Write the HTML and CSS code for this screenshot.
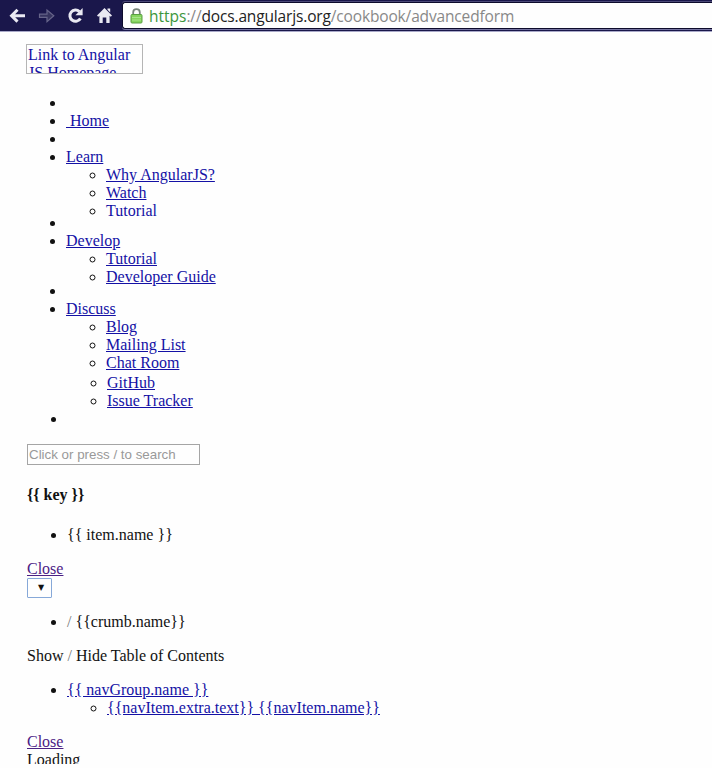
FILE: index.html
```html
<!DOCTYPE html>
<html lang="en">
<head>
<meta charset="utf-8">
<title>AngularJS</title>
<link rel="stylesheet" href="styles.css">
</head>
<body>
<header class="toolbar">
  <svg class="tools" width="122" height="32" viewBox="0 0 122 32">
    <path d="M25 15.7H12M17.5 9.8L11.6 15.7L17.5 21.6" fill="none" stroke="#e9e9f2" stroke-width="3"/>
    <path d="M39.5 14.2H47V10L53.8 15.7L47 21.6V17.3H39.5Z" fill="#36345f" stroke="#67658a" stroke-width="1.2"/>
    <path d="M79.4 11.6A5.6 5.6 0 1 0 80.4 18.4" fill="none" stroke="#e9e9f2" stroke-width="3"/>
    <path d="M82.6 8V15.2H75.4Z" fill="#e9e9f2"/>
    <path d="M104.5 8L112 15.5L110.8 16.8L109.6 15.8V23H106.3V17.6H102.7V23H99.4V15.8L98.2 16.8L97 15.5ZM107.5 8.6H110.2V12.4L107.5 9.8Z" fill="#e9e9f2"/>
  </svg>
  <div class="address">
    <svg class="lock" width="13" height="16" viewBox="0 0 13 16">
      <path d="M3.2 7V4.2C3.2 .2 9.8 .2 9.8 4.2V7" fill="none" stroke="#77837a" stroke-width="1.8"/>
      <rect x="1" y="6.5" width="11" height="8.5" rx="1" fill="#86d55f" stroke="#5a9e43"/>
      <path d="M2 9.5H11M2 12H11" stroke="#a9e58b"/>
    </svg>
    <span class="url"><span class="scheme">https</span><span class="path">://</span>docs.angularjs.org<span class="path">/cookbook/advancedform</span></span>
  </div>
</header>
<main class="page">
  <a class="logo">Link to Angular JS Homepage</a>
  <ul class="nav">
    <li></li>
    <li><a>&nbsp;Home</a></li>
    <li></li>
    <li><a>Learn</a>
      <ul class="learn">
        <li><a>Why AngularJS?</a></li>
        <li><a>Watch</a></li>
        <li><a class="plain">Tutorial</a></li>
      </ul>
    </li>
    <li></li>
    <li><a>Develop</a>
      <ul class="develop">
        <li><a>Tutorial</a></li>
        <li><a>Developer Guide</a></li>
      </ul>
    </li>
    <li></li>
    <li><a>Discuss</a>
      <ul>
        <li><a>Blog</a></li>
        <li><a>Mailing List</a></li>
        <li><a>Chat Room</a></li>
        <li class="github"><a>GitHub</a></li>
        <li class="shifted"><a>Issue Tracker</a></li>
      </ul>
    </li>
    <li class="shifted"></li>
  </ul>
  <div class="content">
    <input class="search" type="text" placeholder="Click or press / to search">
    <h4>{{ key }}</h4>
    <ul><li>{{ item.name }}</li></ul>
    <a class="close">Close</a>
    <div class="select">▼</div>
    <ul class="crumbs"><li><span class="slash">/</span> {{crumb.name}}</li></ul>
    <p>Show <span class="slash">/</span> Hide Table of Contents</p>
    <ul>
      <li><a>{{ navGroup.name }}</a>
        <ul><li><a>{{navItem.extra.text}} {{navItem.name}}</a></li></ul>
      </li>
    </ul>
    <a class="close">Close</a>
    <div class="loading">Loading</div>
  </div>
</main>
</body>
</html>
```
FILE: styles.css
```css
* { box-sizing: border-box; }
body {
  margin: 0;
  height: 768px;
  overflow: hidden;
  background: #fefefe;
  color: #111;
  font: 16px/18px "Liberation Serif", serif;
}
.toolbar {
  display: flex;
  height: 32px;
  background: #1a174b;
  border-bottom: 1px solid #a9a9c9;
}
.tools { flex: none; }
.address {
  display: flex;
  align-items: center;
  flex: 1;
  height: 27px;
  margin-top: 2px;
  padding-left: 7px;
  background: #fefefe;
  border: 1px solid #0d0b2c;
  border-right: 0;
  border-radius: 3px 0 0 3px;
  box-shadow: 0 -1px #4c4978, 0 1px #7775a3;
}
.lock { margin-right: 6px; }
.url {
  color: #222;
  font: 15.5px/22px "Open Sans", sans-serif;
  letter-spacing: -0.15px;
  white-space: nowrap;
}
.scheme { color: #3c963c; letter-spacing: 0; }
.path { color: #888; }
.page { padding: 12px 0 0 26px; }
.logo {
  display: block;
  width: 117px;
  height: 30px;
  padding: 1px;
  overflow: hidden;
  border: 1px solid #b5b5b5;
  text-decoration: none;
}
a { color: #1411a5; text-decoration: underline; }
.plain { text-decoration: none; }
ul { margin: 0; padding-left: 40px; }
li { min-height: 18px; }
.nav { margin-top: 20px; }
.learn { margin-bottom: -6px; }
.develop { margin-bottom: -4px; }
.shifted, .github { margin-left: 1px; }
.github { margin-top: 2px; }
.content {
  height: 320px;
  margin: 16px 0 0 1px;
  overflow: hidden;
}
.search {
  display: block;
  width: 173px;
  height: 21px;
  padding: 1px;
  border: 1px solid #a5a5a5;
  background: #fefefe;
  font: 13.33px "Liberation Sans", sans-serif;
}
.search::placeholder { color: #999; }
h4 { margin: 21px 0 22px; font-size: 16px; line-height: 18px; }
.close { display: block; width: max-content; margin-top: 16px; color: #4b2185; }
.select {
  width: 25px;
  height: 20px;
  padding-left: 10px;
  border: 1px solid #86a8d8;
  border-radius: 1px;
  font: 8px/17px "DejaVu Sans", sans-serif;
}
.crumbs { margin-top: 15px; }
.slash { color: #777; }
p { margin: 16px 0; }
```
